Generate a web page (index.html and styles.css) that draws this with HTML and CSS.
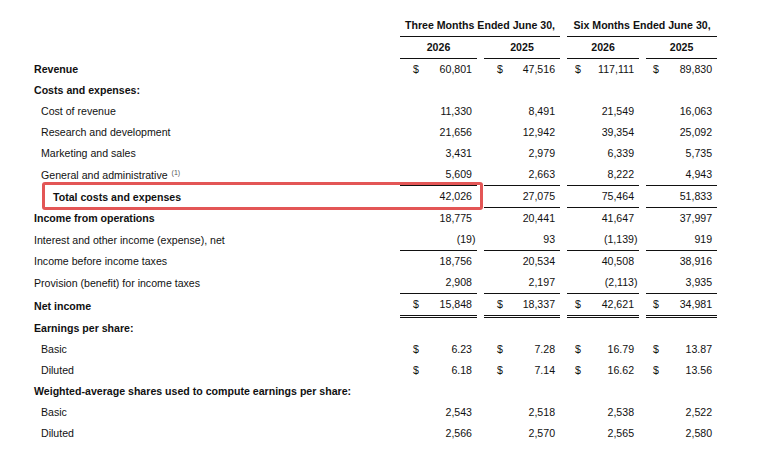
FILE: index.html
```html
<!DOCTYPE html>
<html lang="en">
<head>
<meta charset="utf-8">
<title>Condensed Statements of Income</title>
<link rel="stylesheet" href="styles.css">
</head>
<body>
<table class="fin">
  <colgroup>
    <col class="w-label">
    <col class="w-c12"><col class="w-n1"><col class="w-gap">
    <col class="w-c12"><col class="w-n2"><col class="w-gap">
    <col class="w-c34"><col class="w-n1"><col class="w-gap">
    <col class="w-c34"><col class="w-n2">
  </colgroup>
  <thead>
    <tr>
      <th></th>
      <th colspan="5" class="hd ul">Three Months Ended June 30,</th>
      <th></th>
      <th colspan="5" class="hd ul">Six Months Ended June 30,</th>
    </tr>
    <tr>
      <th></th>
      <th colspan="2" class="hd ul">2026</th><th></th>
      <th colspan="2" class="hd ul">2025</th><th></th>
      <th colspan="2" class="hd ul">2026</th><th></th>
      <th colspan="2" class="hd ul">2025</th>
    </tr>
  </thead>
  <tbody>
    <tr>
      <td class="lbl b">Revenue</td>
      <td class="cur p1">$</td><td class="num">60,801</td><td></td>
      <td class="cur p1">$</td><td class="num">47,516</td><td></td>
      <td class="cur p3">$</td><td class="num">117,111</td><td></td>
      <td class="cur p4">$</td><td class="num">89,830</td>
    </tr>
    <tr>
      <td class="lbl b">Costs and expenses:</td>
      <td></td><td></td><td></td><td></td><td></td><td></td><td></td><td></td><td></td><td></td><td></td>
    </tr>
    <tr>
      <td class="lbl in">Cost of revenue</td>
      <td></td><td class="num">11,330</td><td></td>
      <td></td><td class="num">8,491</td><td></td>
      <td></td><td class="num">21,549</td><td></td>
      <td></td><td class="num">16,063</td>
    </tr>
    <tr>
      <td class="lbl in">Research and development</td>
      <td></td><td class="num">21,656</td><td></td>
      <td></td><td class="num">12,942</td><td></td>
      <td></td><td class="num">39,354</td><td></td>
      <td></td><td class="num">25,092</td>
    </tr>
    <tr>
      <td class="lbl in">Marketing and sales</td>
      <td></td><td class="num">3,431</td><td></td>
      <td></td><td class="num">2,979</td><td></td>
      <td></td><td class="num">6,339</td><td></td>
      <td></td><td class="num">5,735</td>
    </tr>
    <tr>
      <td class="lbl in">General and administrative <sup class="fn">(1)</sup></td>
      <td class="ul"></td><td class="num ul">5,609</td><td></td>
      <td class="ul"></td><td class="num ul">2,663</td><td></td>
      <td class="ul"></td><td class="num ul">8,222</td><td></td>
      <td class="ul"></td><td class="num ul">4,943</td>
    </tr>
    <tr class="hl-row">
      <td class="lbl b in2 hl-cell">Total costs and expenses<span class="hl-box" aria-hidden="true"></span></td>
      <td class="ul"></td><td class="num ul">42,026</td><td></td>
      <td class="ul"></td><td class="num ul">27,075</td><td></td>
      <td class="ul"></td><td class="num ul">75,464</td><td></td>
      <td class="ul"></td><td class="num ul">51,833</td>
    </tr>
    <tr>
      <td class="lbl b">Income from operations</td>
      <td></td><td class="num">18,775</td><td></td>
      <td></td><td class="num">20,441</td><td></td>
      <td></td><td class="num">41,647</td><td></td>
      <td></td><td class="num">37,997</td>
    </tr>
    <tr>
      <td class="lbl">Interest and other income (expense), net</td>
      <td class="ul"></td><td class="num ul">(19<span class="rp">)</span></td><td></td>
      <td class="ul"></td><td class="num ul">93</td><td></td>
      <td class="ul"></td><td class="num ul">(1,139<span class="rp">)</span></td><td></td>
      <td class="ul"></td><td class="num ul">919</td>
    </tr>
    <tr>
      <td class="lbl">Income before income taxes</td>
      <td></td><td class="num">18,756</td><td></td>
      <td></td><td class="num">20,534</td><td></td>
      <td></td><td class="num">40,508</td><td></td>
      <td></td><td class="num">38,916</td>
    </tr>
    <tr>
      <td class="lbl">Provision (benefit) for income taxes</td>
      <td class="ul"></td><td class="num ul">2,908</td><td></td>
      <td class="ul"></td><td class="num ul">2,197</td><td></td>
      <td class="ul"></td><td class="num ul">(2,113<span class="rp">)</span></td><td></td>
      <td class="ul"></td><td class="num ul">3,935</td>
    </tr>
    <tr>
      <td class="lbl b">Net income</td>
      <td class="cur p1 dul">$</td><td class="num dul">15,848</td><td></td>
      <td class="cur p1 dul">$</td><td class="num dul">18,337</td><td></td>
      <td class="cur p3 dul">$</td><td class="num dul">42,621</td><td></td>
      <td class="cur p4 dul">$</td><td class="num dul">34,981</td>
    </tr>
    <tr>
      <td class="lbl b">Earnings per share:</td>
      <td></td><td></td><td></td><td></td><td></td><td></td><td></td><td></td><td></td><td></td><td></td>
    </tr>
    <tr>
      <td class="lbl in">Basic</td>
      <td class="cur p1">$</td><td class="num">6.23</td><td></td>
      <td class="cur p1">$</td><td class="num">7.28</td><td></td>
      <td class="cur p3">$</td><td class="num">16.79</td><td></td>
      <td class="cur p4">$</td><td class="num">13.87</td>
    </tr>
    <tr>
      <td class="lbl in">Diluted</td>
      <td class="cur p1">$</td><td class="num">6.18</td><td></td>
      <td class="cur p1">$</td><td class="num">7.14</td><td></td>
      <td class="cur p3">$</td><td class="num">16.62</td><td></td>
      <td class="cur p4">$</td><td class="num">13.56</td>
    </tr>
    <tr>
      <td class="lbl b nowrap" colspan="12">Weighted-average shares used to compute earnings per share:</td>
    </tr>
    <tr>
      <td class="lbl in">Basic</td>
      <td></td><td class="num">2,543</td><td></td>
      <td></td><td class="num">2,518</td><td></td>
      <td></td><td class="num">2,538</td><td></td>
      <td></td><td class="num">2,522</td>
    </tr>
    <tr>
      <td class="lbl in">Diluted</td>
      <td></td><td class="num">2,566</td><td></td>
      <td></td><td class="num">2,570</td><td></td>
      <td></td><td class="num">2,565</td><td></td>
      <td></td><td class="num">2,580</td>
    </tr>
  </tbody>
</table>
</body>
</html>
```

FILE: styles.css
```css
html, body {
  margin: 0;
  padding: 0;
  background: #ffffff;
}

body {
  font-family: "Liberation Sans", Arial, sans-serif;
  font-size: 10.6px;
  color: #111111;
}

.fin {
  margin: 15px 0 0 34px;
  width: 683px;
  table-layout: fixed;
  border-collapse: separate;
  border-spacing: 0;
}

.w-label { width: 366px; }
.w-c12 { width: 25px; }
.w-c34 { width: 20px; }
.w-n1 { width: 52px; }
.w-n2 { width: 51px; }
.w-gap { width: 7px; }

.fin th,
.fin td {
  padding: 0;
  line-height: 21px;
  white-space: nowrap;
  vertical-align: middle;
}

.hd {
  font-weight: bold;
  text-align: center;
}

.lbl {
  text-align: left;
  overflow: visible;
}

.b { font-weight: bold; }
.in { padding-left: 7px !important; }
.in2 { padding-left: 19px !important; }

.cur { text-align: left; }
.p1 { padding-left: 13px !important; }
.p3 { padding-left: 8px !important; }
.p4 { padding-left: 7px !important; }

.num {
  text-align: right;
  padding-right: 5px !important;
}

.rp { margin-right: -3.5px; }

.ul { border-bottom: 1px solid #111111; }
.dul { border-bottom: 3px double #111111; }

.fn {
  font-size: 7px;
  color: #555;
  vertical-align: 4px;
  line-height: 0;
  margin-left: 1px;
}

.hl-cell { position: relative; }

.hl-box {
  position: absolute;
  left: 8px;
  top: -4px;
  width: 441px;
  height: 28px;
  box-sizing: border-box;
  border: 3.5px solid #e35656;
  border-radius: 3px;
  pointer-events: none;
}
```
